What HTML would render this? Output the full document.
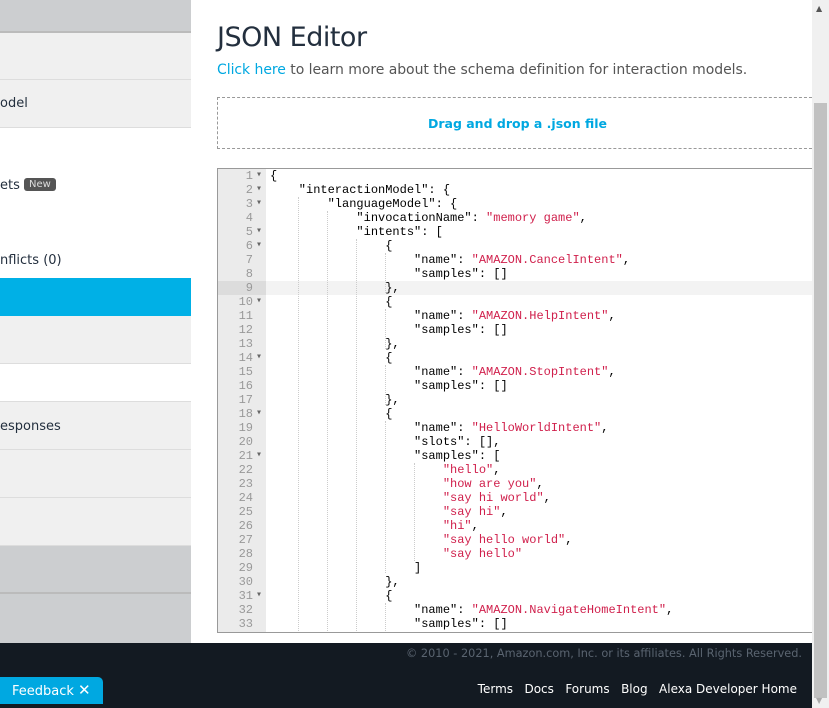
<!DOCTYPE html>
<html><head><style>
*{margin:0;padding:0;box-sizing:border-box}
body{width:829px;height:708px;overflow:hidden;position:relative;background:#fff;font-family:"DejaVu Sans","Liberation Sans",sans-serif;color:#232f3e}
.sb{position:absolute;left:0;top:0;width:191px;height:643px;border-right:1px solid #ddd}
.r{position:absolute;left:0;width:191px;border-bottom:1px solid #ddd;font-size:13px;color:#232f3e}
.r span{position:absolute;left:0}
.main{position:absolute;left:192px;top:0;width:620px;height:643px}
h1{position:absolute;left:25px;top:22px;font-weight:normal;font-size:27px;color:#232f3e;font-family:"DejaVu Sans",sans-serif;letter-spacing:-0.5px}
.lnk{position:absolute;left:25px;top:62px;font-size:14px;color:#555;white-space:nowrap;letter-spacing:-0.05px}
.lnk a{color:#00a8e1;text-decoration:none}
.drop{position:absolute;left:25px;top:97px;width:600px;height:52px;border:1px dashed #999;border-right:none;text-align:center;line-height:52px;font-size:12.5px;font-weight:bold;color:#00a8e1}
.ed{position:absolute;left:217px;top:168px;width:595px;height:465px;border:1px solid #999;border-right:none;overflow:hidden;font-family:"Liberation Mono",monospace;font-size:12px}
.gut{position:absolute;left:0;top:0;width:48px;height:100%;background:#ebebeb}
.ln{position:absolute;left:0;height:14px;line-height:14px;width:100%}
.ln .n{position:absolute;left:0;width:35px;text-align:right;color:#999}
.ln .f{position:absolute;left:38px;color:#666;font-size:10px}
.ln .c{position:absolute;left:52px;white-space:pre;color:#000}
.s{color:#d0204c}
.g{position:absolute;border-left:1px dotted #ccc;width:0}
.foot{position:absolute;left:0;top:643px;width:812px;height:65px;background:#131a22}
.sc{position:absolute;left:812px;top:0;width:17px;height:708px;background:#f0f0f0}
</style></head><body>
<div class="sb">
<div class="r" style="top:0;height:33px;background:#ccced0;border-bottom:2px solid #bbb"></div>
<div class="r" style="top:33px;height:47px;background:#f0f0f0"></div>
<div class="r" style="top:80px;height:48px;background:#f0f0f0"><span style="top:16px">odel</span></div>
<div class="r" style="top:128px;height:150px;background:#fff;border:none"><span style="top:50px">ets</span><span style="left:24px;top:50px;background:#555;color:#ddd;font-size:10px;padding:1px 5px;border-radius:3px">New</span><span style="top:125px">nflicts (0)</span></div>
<div class="r" style="top:278px;height:38px;background:#00b0e6;border:none"></div>
<div class="r" style="top:316px;height:48px;background:#f0f0f0"></div>
<div class="r" style="top:364px;height:38px;background:#fff"></div>
<div class="r" style="top:402px;height:48px;background:#f0f0f0"><span style="top:17px">esponses</span></div>
<div class="r" style="top:450px;height:48px;background:#f0f0f0"></div>
<div class="r" style="top:498px;height:48px;background:#f0f0f0"></div>
<div class="r" style="top:546px;height:48px;background:#ccced0;border-bottom:2px solid #bbb"></div>
<div class="r" style="top:594px;height:49px;background:#ccced0;border:none"></div>
</div>
<div class="main">
<h1>JSON Editor</h1>
<div class="lnk"><a>Click here</a> to learn more about the schema definition for interaction models.</div>
<div class="drop">Drag and drop a .json file</div>
</div>
<div class="ed">
<div class="gut"></div>
<div class="ln" style="top:112px;background:#f3f3f3"></div>
<div style="position:absolute;left:0;top:112px;width:48px;height:14px;background:#dcdcdc"></div>
<div class="g" style="left:80px;top:28px;height:440px"></div>
<div class="g" style="left:109px;top:42px;height:430px"></div>
<div class="g" style="left:138px;top:70px;height:400px"></div>
<div class="g" style="left:167px;top:84px;height:40px"></div>
<div class="g" style="left:167px;top:140px;height:40px"></div>
<div class="g" style="left:167px;top:196px;height:40px"></div>
<div class="g" style="left:167px;top:252px;height:152px"></div>
<div class="g" style="left:196px;top:294px;height:98px"></div>
<div class="g" style="left:167px;top:434px;height:40px"></div>
<div id="code"></div>
</div>
<script>
var L=[
[1,1,'{'],[2,1,'    "interactionModel": {'],[3,1,'        "languageModel": {'],
[4,0,'            "invocationName": <s>"memory game"</s>,'],[5,1,'            "intents": ['],
[6,1,'                {'],[7,0,'                    "name": <s>"AMAZON.CancelIntent"</s>,'],[8,0,'                    "samples": []'],
[9,0,'                },'],[10,1,'                {'],[11,0,'                    "name": <s>"AMAZON.HelpIntent"</s>,'],[12,0,'                    "samples": []'],
[13,0,'                },'],[14,1,'                {'],[15,0,'                    "name": <s>"AMAZON.StopIntent"</s>,'],[16,0,'                    "samples": []'],
[17,0,'                },'],[18,1,'                {'],[19,0,'                    "name": <s>"HelloWorldIntent"</s>,'],[20,0,'                    "slots": [],'],
[21,1,'                    "samples": ['],[22,0,'                        <s>"hello"</s>,'],[23,0,'                        <s>"how are you"</s>,'],
[24,0,'                        <s>"say hi world"</s>,'],[25,0,'                        <s>"say hi"</s>,'],[26,0,'                        <s>"hi"</s>,'],
[27,0,'                        <s>"say hello world"</s>,'],[28,0,'                        <s>"say hello"</s>'],[29,0,'                    ]'],
[30,0,'                },'],[31,1,'                {'],[32,0,'                    "name": <s>"AMAZON.NavigateHomeIntent"</s>,'],[33,0,'                    "samples": []'],[34,0,'                }']];
var h='';L.forEach(function(l){var t=(l[0]-1)*14;h+='<div class="ln" style="top:'+t+'px"><span class="n">'+l[0]+'</span>'+(l[1]?'<span class="f">&#9662;</span>':'')+'<span class="c">'+l[2].replace(/<s>/g,'<span class="s">').replace(/<\/s>/g,'</span>')+'</span></div>';});
document.getElementById('code').innerHTML=h;
</script>
<div class="foot">
<div style="position:absolute;right:10px;top:4px;font-size:11.3px;color:#5a6470;white-space:nowrap">© 2010 - 2021, Amazon.com, Inc. or its affiliates. All Rights Reserved.</div>
<div style="position:absolute;right:15px;top:39px;font-size:12px;color:#fff;white-space:nowrap">Terms&nbsp;&nbsp; Docs&nbsp;&nbsp; Forums&nbsp;&nbsp; Blog&nbsp;&nbsp; Alexa Developer Home</div>
</div>
<div style="position:absolute;left:0;top:677px;width:103px;height:27px;background:#00a8e1;border-radius:0 5px 0 0;color:#fff;font-size:13px;line-height:27px;padding-left:12px">Feedback <span style="font-size:15px">✕</span></div>
<div class="sc"><div style="position:absolute;left:2px;top:103px;width:13px;height:595px;background:#c1c1c1"></div><div style="position:absolute;left:4px;top:4px;font-size:8px;color:#555">▲</div><div style="position:absolute;left:4px;top:696px;font-size:8px;color:#aaa">▼</div></div>
</body></html>
